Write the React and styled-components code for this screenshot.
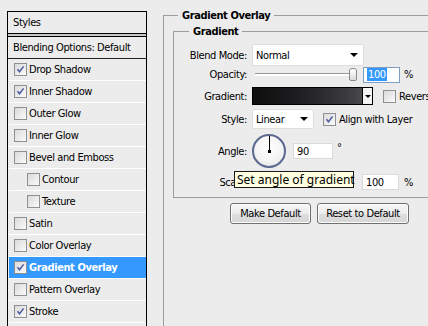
import React from "react";
import styled, { createGlobalStyle } from "styled-components";

const Global = createGlobalStyle`
  html, body { margin: 0; padding: 0; background: #ececec; overflow: hidden; }
  body { font-family: "DejaVu Sans Condensed", "DejaVu Sans", sans-serif; font-size: 11px; letter-spacing: -0.4px; color: #000; }
`;

const Page = styled.div`
  position: relative;
  display: flex;
  align-items: flex-start;
  width: 428px;
  height: 326px;
  overflow: hidden;
`;

const StylesPanel = styled.div`
  box-sizing: border-box;
  margin: 11px 0 0 7px;
  width: 140px;
  height: 340px;
  flex: none;
  border: 1px solid #000;
  border-bottom: none;
  background: #ececec;
`;

const PanelHeader = styled.div`
  height: 21px;
  display: flex;
  align-items: center;
  padding-left: 5px;
  border-bottom: 1px solid #000;
`;

const HeaderGap = styled.div`
  height: 2px;
  background: #c9c9c9;
`;

const BlendingRow = styled.div`
  height: 21px;
  display: flex;
  align-items: center;
  padding-left: 5px;
  border-top: 1px solid #000;
  border-bottom: 1px solid #222;
`;

const EffectList = styled.div`
  display: flex;
  flex-direction: column;
  padding-left: 1px;
`;

const EffectRow = styled.div`
  height: 21px;
  display: flex;
  align-items: center;
  gap: 2px;
  padding-left: ${(p) => (p.$indent ? 18 : 5)}px;
  border-bottom: 1px solid #fff;
  background: ${(p) => (p.$selected ? "#3399ff" : "transparent")};
  color: ${(p) => (p.$selected ? "#fff" : "#000")};
  font-weight: ${(p) => (p.$selected ? "bold" : "normal")};
`;

const Box = styled.span`
  box-sizing: border-box;
  flex: none;
  width: 13px;
  height: 13px;
  border: 1px solid #8f9092;
  background: linear-gradient(135deg, #dadada 0%, #f4f4f4 80%, #ffffff 100%);
  display: inline-flex;
  align-items: center;
  justify-content: center;
`;

const Check = ({ checked }) => (
  <Box>
    {checked && (
      <svg width="9" height="9" viewBox="0 0 9 9">
        <path d="M1.5 4.3 L3.5 6.8 L7.6 1.4" fill="none" stroke="#4a5aa0" strokeWidth="1.5" />
      </svg>
    )}
  </Box>
);

const RightArea = styled.div`
  flex: none;
  margin-left: 16px;
  width: 300px;
`;

const Group = styled.fieldset`
  margin: 0;
  min-width: 0;
  border: 1px solid #9d9d9d;
  border-right: none;
  padding: ${(p) => p.$pad};
`;

const Legend = styled.legend`
  font-weight: bold;
  padding: 0 4px;
  margin-left: ${(p) => p.$ml}px;
  line-height: 13px;
`;

const OuterGroup = styled(Group)`
  margin-top: 9px;
  height: 400px;
  box-sizing: border-box;
`;

const InnerGroup = styled(Group)`
  margin-top: 3px;
  display: flex;
  flex-direction: column;
`;

const FormRow = styled.div`
  display: flex;
  align-items: center;
  height: ${(p) => p.$h}px;
  margin-top: ${(p) => p.$mt}px;
`;

const Label = styled.span`
  width: 73px;
  flex: none;
  text-align: right;
  margin-right: 5px;
`;

const Select = styled.div`
  box-sizing: border-box;
  width: ${(p) => p.$w}px;
  height: ${(p) => p.$h}px;
  background: #fff;
  border: 1px solid #dedede;
  border-radius: 2px;
  display: flex;
  align-items: center;
  justify-content: space-between;
  padding: 0 5px 0 3px;
`;

const Arrow = styled.span`
  width: 0;
  height: 0;
  border-left: 4px solid transparent;
  border-right: 4px solid transparent;
  border-top: 4px solid #000;
`;

const Slider = styled.div`
  position: relative;
  width: 102px;
  height: 17px;
  margin-left: 3px;
  display: flex;
  align-items: center;
`;

const Track = styled.div`
  width: 100%;
  height: 2px;
  border-top: 1px solid #9a9a9a;
  background: #fff;
`;

const Thumb = styled.div`
  position: absolute;
  right: 0;
  top: 2px;
  box-sizing: border-box;
  width: 8px;
  height: 13px;
  border: 1px solid #8a8a8a;
  border-radius: 3px 3px 2px 2px;
  background: linear-gradient(#ffffff, #dcdcdc);
`;

const NumInput = styled.div`
  box-sizing: border-box;
  width: ${(p) => p.$w}px;
  height: 16px;
  margin-left: ${(p) => p.$ml}px;
  background: #fff;
  border: 1px solid ${(p) => (p.$focus ? "#7f9dc4" : "#dadada")};
  display: flex;
  align-items: center;
  padding-left: 3px;
`;

const Selected = styled.span`
  background: #3399ff;
  color: #fff;
  padding: 0 1px;
  line-height: 13px;
`;

const Unit = styled.span`
  margin-left: ${(p) => p.$ml}px;
  margin-bottom: ${(p) => (p.$sup ? 7 : 0)}px;
`;

const Swatch = styled.div`
  box-sizing: border-box;
  width: 121px;
  height: 18px;
  border: 1px solid #000;
  display: flex;
`;

const SwatchFill = styled.div`
  flex: 1;
  background: linear-gradient(90deg, #0e0e0f 0%, #1d1d1f 40%, #3a393d 85%, #4a494d 100%);
  border-right: 1px solid #000;
`;

const SwatchArrow = styled.div`
  width: 9px;
  background: #f4f4f4;
  display: flex;
  align-items: center;
  justify-content: center;
`;

const SmallArrow = styled.span`
  width: 0;
  height: 0;
  border-left: 3px solid transparent;
  border-right: 3px solid transparent;
  border-top: 3px solid #000;
`;

const CheckLabel = styled.span`
  display: inline-flex;
  align-items: center;
  gap: 3px;
  margin-left: ${(p) => p.$ml}px;
  white-space: nowrap;
`;

const Dial = styled.div`
  box-sizing: border-box;
  position: relative;
  width: 34px;
  height: 34px;
  border-radius: 50%;
  border: 2px solid #5b6890;
  background: radial-gradient(circle at 50% 40%, #ffffff 0%, #f3f3f3 60%, #dadada 100%);
  flex: none;
`;

const DialHand = styled.div`
  position: absolute;
  left: 15px;
  top: 0;
  width: 1px;
  height: 15px;
  background: #000;
`;

const DialDot = styled.div`
  position: absolute;
  left: 14px;
  top: 14px;
  width: 3px;
  height: 3px;
  background: #000;
`;

const ButtonRow = styled.div`
  display: flex;
  gap: 6px;
  margin: 5px 0 0 57px;
`;

const Button = styled.div`
  box-sizing: border-box;
  width: ${(p) => p.$w}px;
  height: 21px;
  border: 1px solid #707070;
  border-radius: 3px;
  background: linear-gradient(#f6f6f6 0%, #ececec 50%, #dedede 51%, #d6d6d6 100%);
  box-shadow: inset 0 0 0 1px #fcfcfc;
  display: flex;
  align-items: center;
  justify-content: center;
`;

const Tooltip = styled.div`
  position: absolute;
  left: 234px;
  top: 171px;
  box-sizing: border-box;
  width: 120px;
  height: 17px;
  background: #ffffe1;
  border: 1px solid #1a1a1a;
  font-family: "Noto Sans", "Liberation Sans", sans-serif;
  font-size: 12px;
  letter-spacing: 0;
  line-height: 15px;
  padding-left: 2px;
  white-space: nowrap;
`;

const effects = [
  { name: "Drop Shadow", checked: true },
  { name: "Inner Shadow", checked: true },
  { name: "Outer Glow" },
  { name: "Inner Glow" },
  { name: "Bevel and Emboss" },
  { name: "Contour", indent: true },
  { name: "Texture", indent: true },
  { name: "Satin" },
  { name: "Color Overlay" },
  { name: "Gradient Overlay", checked: true, selected: true },
  { name: "Pattern Overlay" },
  { name: "Stroke", checked: true },
  { name: "", blank: true },
];

export default function App() {
  return (
    <Page>
      <Global />
      <StylesPanel>
        <PanelHeader>Styles</PanelHeader>
        <HeaderGap />
        <BlendingRow>Blending Options: Default</BlendingRow>
        <EffectList>
          {effects.map((e, i) => (
            <EffectRow key={i} $indent={e.indent} $selected={e.selected}>
              {!e.blank && <Check checked={e.checked} />}
              {e.name}
            </EffectRow>
          ))}
        </EffectList>
      </StylesPanel>
      <RightArea>
        <OuterGroup $pad="0 0 0 9px">
          <Legend $ml={5}>Gradient Overlay</Legend>
          <InnerGroup $pad="6px 0 7px 0">
            <Legend $ml={15}>Gradient</Legend>
            <FormRow $h={22} $mt={0}>
              <Label>Blend Mode:</Label>
              <Select $w={112} $h={22}>
                Normal
                <Arrow />
              </Select>
            </FormRow>
            <FormRow $h={17} $mt={0}>
              <Label>Opacity:</Label>
              <Slider>
                <Track />
                <Thumb />
              </Slider>
              <NumInput $w={37} $ml={6} $focus>
                <Selected>100</Selected>
              </NumInput>
              <Unit $ml={4}>%</Unit>
            </FormRow>
            <FormRow $h={18} $mt={4}>
              <Label>Gradient:</Label>
              <Swatch>
                <SwatchFill />
                <SwatchArrow>
                  <SmallArrow />
                </SwatchArrow>
              </Swatch>
              <CheckLabel $ml={10}>
                <Check />
                Reverse
              </CheckLabel>
            </FormRow>
            <FormRow $h={20} $mt={4}>
              <Label>Style:</Label>
              <Select $w={62} $h={20}>
                Linear
                <Arrow />
              </Select>
              <CheckLabel $ml={9}>
                <Check checked />
                Align with Layer
              </CheckLabel>
            </FormRow>
            <FormRow $h={34} $mt={5}>
              <Label>Angle:</Label>
              <Dial>
                <DialHand />
                <DialDot />
              </Dial>
              <NumInput $w={40} $ml={7}>90</NumInput>
              <Unit $ml={4} $sup>°</Unit>
            </FormRow>
            <FormRow $h={16} $mt={6}>
              <Label>Scale:</Label>
              <NumInput $w={37} $ml={110}>100</NumInput>
              <Unit $ml={5}>%</Unit>
            </FormRow>
          </InnerGroup>
          <ButtonRow>
            <Button $w={81}>Make Default</Button>
            <Button $w={92}>Reset to Default</Button>
          </ButtonRow>
        </OuterGroup>
      </RightArea>
      <Tooltip>Set angle of gradient</Tooltip>
    </Page>
  );
}
